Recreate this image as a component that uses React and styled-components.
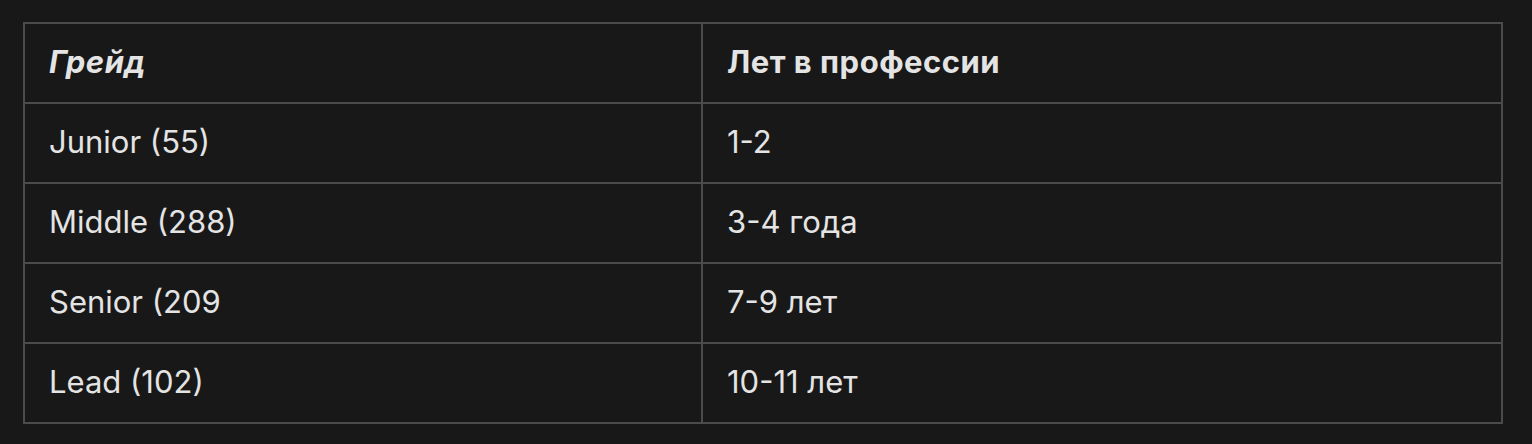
import React from "react";
import styled, { createGlobalStyle } from "styled-components";

const Global = createGlobalStyle`
  html, body { margin: 0; padding: 0; background: #181818; }
  body { font-family: Inter, "Noto Sans", sans-serif; }
`;

const Page = styled.div`
  padding: 22px 29px 20px 23px;
  background: #181818;
`;

const Table = styled.table`
  width: 100%;
  border-collapse: collapse;
  border: 2px solid #4b4b4b;
  table-layout: fixed;
`;

const Cell = styled.td`
  border: 2px solid #4b4b4b;
  height: 80px;
  box-sizing: border-box;
  padding: 0 24px 2px;
  color: #e4e4e4;
  font-size: 31px;
  line-height: 1.2;
  font-weight: ${(p) => (p.$head ? 700 : 400)};
  font-style: ${(p) => (p.$italic ? "italic" : "normal")};
  letter-spacing: ${(p) => (p.$head ? "0.5px" : "0")};
  text-align: left;
  vertical-align: middle;
`;

const rows = [
  ["Junior (55)", "1-2"],
  ["Middle (288)", "3-4 года"],
  ["Senior (209", "7-9 лет"],
  ["Lead (102)", "10-11 лет"],
];

export default function App() {
  return (
    <>
      <Global />
      <Page>
        <Table>
          <colgroup>
            <col style={{ width: "678px" }} />
            <col />
          </colgroup>
          <thead>
            <tr>
              <Cell as="th" $head $italic>Грейд</Cell>
              <Cell as="th" $head>Лет в профессии</Cell>
            </tr>
          </thead>
          <tbody>
            {rows.map(([a, b]) => (
              <tr key={a}>
                <Cell>{a}</Cell>
                <Cell>{b}</Cell>
              </tr>
            ))}
          </tbody>
        </Table>
      </Page>
    </>
  );
}
